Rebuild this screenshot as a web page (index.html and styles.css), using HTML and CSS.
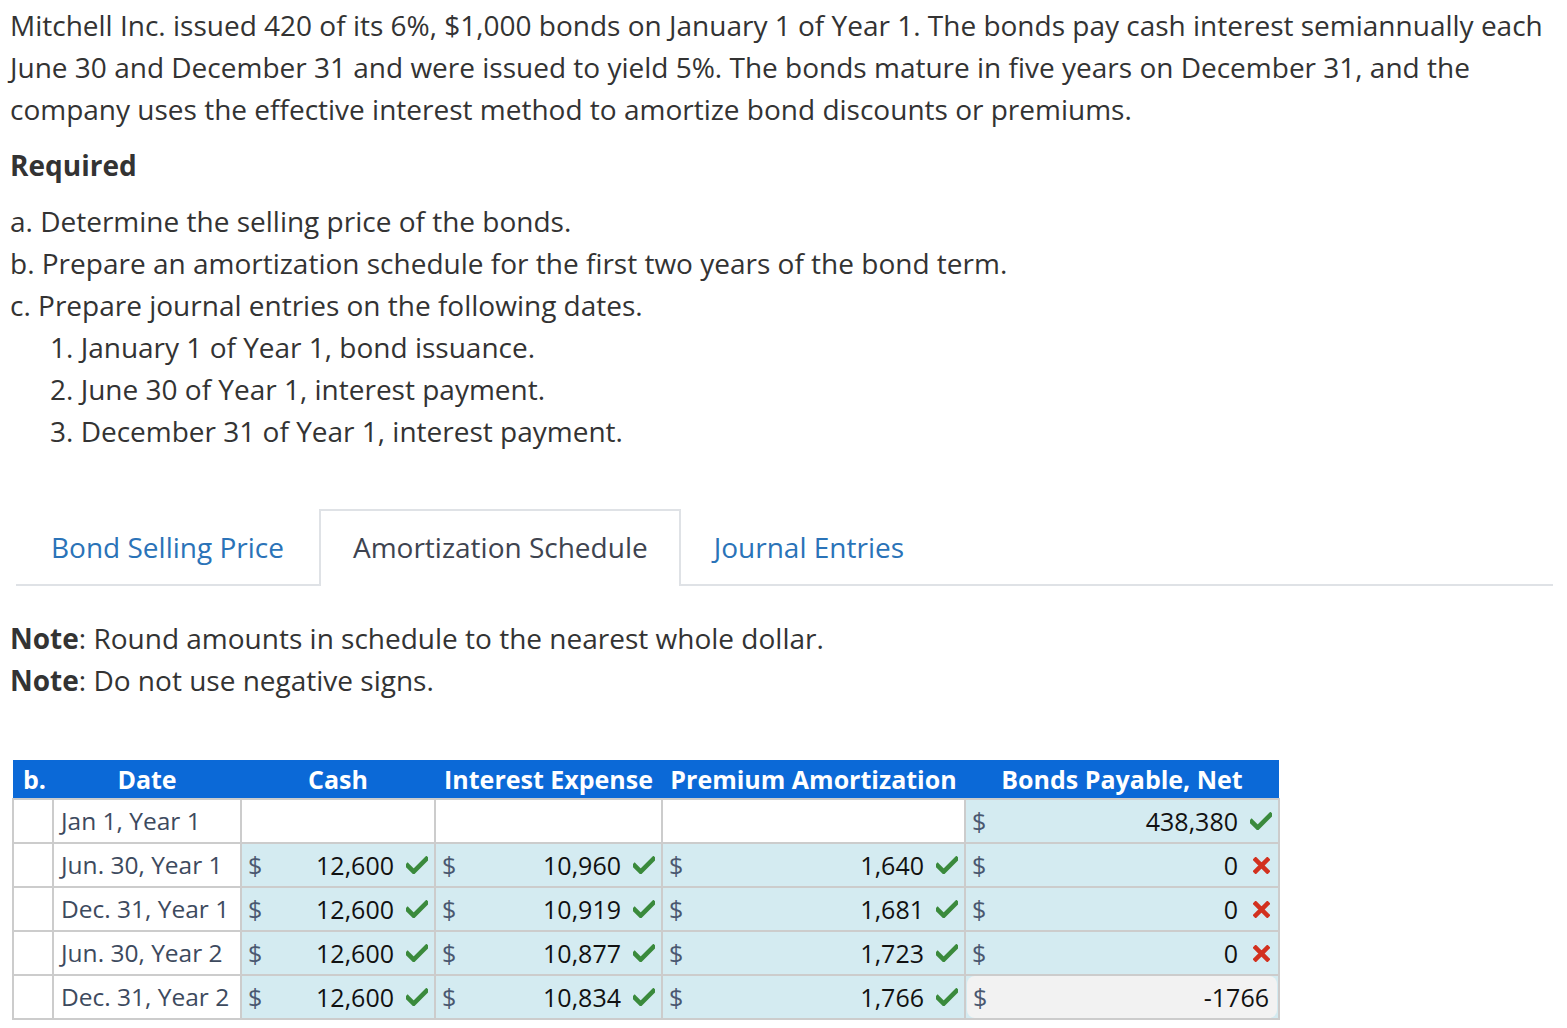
FILE: index.html
```html
<!DOCTYPE html>
<html>
<head>
<meta charset="utf-8">
<link rel="stylesheet" href="styles.css">
</head>
<body>
<div class="page">
  <p class="intro">Mitchell Inc. issued 420 of its 6%, $1,000 bonds on January 1 of Year 1. The bonds pay cash interest semiannually each June 30 and December 31 and were issued to yield 5%. The bonds mature in five years on December 31, and the company uses the effective interest method to amortize bond discounts or premiums.</p>
  <p class="required">Required</p>
  <div class="reqs">
    <div>a. Determine the selling price of the bonds.</div>
    <div>b. Prepare an amortization schedule for the first two years of the bond term.</div>
    <div>c. Prepare journal entries on the following dates.</div>
    <div class="sub">1. January 1 of Year 1, bond issuance.</div>
    <div class="sub">2. June 30 of Year 1, interest payment.</div>
    <div class="sub">3. December 31 of Year 1, interest payment.</div>
  </div>

  <div class="tabs">
    <div class="tab first">Bond Selling Price</div>
    <div class="tab active">Amortization Schedule</div>
    <div class="tab last">Journal Entries</div>
  </div>

  <div class="notes">
    <div><b>Note</b>: Round amounts in schedule to the nearest whole dollar.</div>
    <div><b>Note</b>: Do not use negative signs.</div>
  </div>

  <table class="sched">
    <colgroup>
      <col class="c0"><col class="c1"><col class="c2"><col class="c3"><col class="c4"><col class="c5">
    </colgroup>
    <thead>
      <tr>
        <th class="hb">b.</th>
        <th>Date</th>
        <th>Cash</th>
        <th>Interest Expense</th>
        <th>Premium Amortization</th>
        <th>Bonds Payable, Net</th>
      </tr>
    </thead>
    <tbody>
      <tr>
        <td></td>
        <td class="date">Jan 1, Year 1</td>
        <td class="empty"></td>
        <td class="empty"></td>
        <td class="empty"></td>
        <td class="amt"><div class="cell"><span class="dol">$</span><span class="num">438,380</span><span class="mark ok"><svg viewBox="0 0 20 16"><path d="M1.5 8.5 L7 14 L18.5 2.5" /></svg></span></div></td>
      </tr>
      <tr>
        <td></td>
        <td class="date">Jun. 30, Year 1</td>
        <td class="amt"><div class="cell"><span class="dol">$</span><span class="num">12,600</span><span class="mark ok"><svg viewBox="0 0 20 16"><path d="M1.5 8.5 L7 14 L18.5 2.5" /></svg></span></div></td>
        <td class="amt"><div class="cell"><span class="dol">$</span><span class="num">10,960</span><span class="mark ok"><svg viewBox="0 0 20 16"><path d="M1.5 8.5 L7 14 L18.5 2.5" /></svg></span></div></td>
        <td class="amt"><div class="cell"><span class="dol">$</span><span class="num">1,640</span><span class="mark ok"><svg viewBox="0 0 20 16"><path d="M1.5 8.5 L7 14 L18.5 2.5" /></svg></span></div></td>
        <td class="amt"><div class="cell"><span class="dol">$</span><span class="num">0</span><span class="mark bad"><svg viewBox="0 0 16 16"><path d="M2.5 2.5 L13.5 13.5 M13.5 2.5 L2.5 13.5" /></svg></span></div></td>
      </tr>
      <tr>
        <td></td>
        <td class="date">Dec. 31, Year 1</td>
        <td class="amt"><div class="cell"><span class="dol">$</span><span class="num">12,600</span><span class="mark ok"><svg viewBox="0 0 20 16"><path d="M1.5 8.5 L7 14 L18.5 2.5" /></svg></span></div></td>
        <td class="amt"><div class="cell"><span class="dol">$</span><span class="num">10,919</span><span class="mark ok"><svg viewBox="0 0 20 16"><path d="M1.5 8.5 L7 14 L18.5 2.5" /></svg></span></div></td>
        <td class="amt"><div class="cell"><span class="dol">$</span><span class="num">1,681</span><span class="mark ok"><svg viewBox="0 0 20 16"><path d="M1.5 8.5 L7 14 L18.5 2.5" /></svg></span></div></td>
        <td class="amt"><div class="cell"><span class="dol">$</span><span class="num">0</span><span class="mark bad"><svg viewBox="0 0 16 16"><path d="M2.5 2.5 L13.5 13.5 M13.5 2.5 L2.5 13.5" /></svg></span></div></td>
      </tr>
      <tr>
        <td></td>
        <td class="date">Jun. 30, Year 2</td>
        <td class="amt"><div class="cell"><span class="dol">$</span><span class="num">12,600</span><span class="mark ok"><svg viewBox="0 0 20 16"><path d="M1.5 8.5 L7 14 L18.5 2.5" /></svg></span></div></td>
        <td class="amt"><div class="cell"><span class="dol">$</span><span class="num">10,877</span><span class="mark ok"><svg viewBox="0 0 20 16"><path d="M1.5 8.5 L7 14 L18.5 2.5" /></svg></span></div></td>
        <td class="amt"><div class="cell"><span class="dol">$</span><span class="num">1,723</span><span class="mark ok"><svg viewBox="0 0 20 16"><path d="M1.5 8.5 L7 14 L18.5 2.5" /></svg></span></div></td>
        <td class="amt"><div class="cell"><span class="dol">$</span><span class="num">0</span><span class="mark bad"><svg viewBox="0 0 16 16"><path d="M2.5 2.5 L13.5 13.5 M13.5 2.5 L2.5 13.5" /></svg></span></div></td>
      </tr>
      <tr>
        <td></td>
        <td class="date">Dec. 31, Year 2</td>
        <td class="amt"><div class="cell"><span class="dol">$</span><span class="num">12,600</span><span class="mark ok"><svg viewBox="0 0 20 16"><path d="M1.5 8.5 L7 14 L18.5 2.5" /></svg></span></div></td>
        <td class="amt"><div class="cell"><span class="dol">$</span><span class="num">10,834</span><span class="mark ok"><svg viewBox="0 0 20 16"><path d="M1.5 8.5 L7 14 L18.5 2.5" /></svg></span></div></td>
        <td class="amt"><div class="cell"><span class="dol">$</span><span class="num">1,766</span><span class="mark ok"><svg viewBox="0 0 20 16"><path d="M1.5 8.5 L7 14 L18.5 2.5" /></svg></span></div></td>
        <td class="amt"><div class="cell input"><span class="dol">$</span><span class="num">-1766</span></div></td>
      </tr>
    </tbody>
  </table>
</div>
</body>
</html>
```

FILE: styles.css
```css
html, body {
  margin: 0;
  padding: 0;
  background: #fff;
}
body {
  font-family: "Open Sans", "Noto Sans", sans-serif;
  color: #333;
}
.page {
  padding: 4px 0 0 10px;
  font-size: 28px;
  line-height: 42px;
}
p { margin: 0; }
.intro { width: 1545px; }
.required {
  font-weight: 700;
  margin-top: 14px;
}
.reqs { margin-top: 14px; }
.sub { padding-left: 40px; }

.tabs {
  display: flex;
  margin: 57px 14px 0 6px;
  border-bottom: 2px solid #dfe2e6;
  height: 75px;
}
.tab {
  box-sizing: border-box;
  height: 75px;
  color: #2a73b8;
  line-height: 72px;
  border-top: 2px solid transparent;
}
.tab.first { padding: 0 35px; }
.tab.last { padding: 0 33px; }
.tab.active {
  color: #3e4450;
  background: #fff;
  padding: 0 31px 0 32px;
  height: 77px;
  margin-bottom: -2px;
  border: 2px solid #dfe2e6;
  border-bottom: none;
}

.notes { margin-top: 31px; }
.notes b { font-weight: 700; }

.sched {
  margin-top: 59px;
  margin-left: 2px;
  border-collapse: collapse;
  table-layout: fixed;
  width: 1266px;
  font-size: 25px;
  line-height: 30px;
}
.c0 { width: 40px; }
.c1 { width: 188px; }
.c2 { width: 194px; }
.c3 { width: 227px; }
.c4 { width: 303px; }
.c5 { width: 314px; }

.sched th {
  background: #0b69d7;
  color: #fff;
  font-weight: 700;
  height: 38px;
  padding: 0;
  text-align: center;
  white-space: nowrap;
}
.sched th.hb { text-align: left; padding-left: 10px; }
.sched td {
  border: 2px solid #cccccc;
  height: 42px;
  padding: 0;
  background: #fff;
}
.sched td.date {
  color: #3d4a5e;
  padding-left: 7px;
  white-space: nowrap;
  font-size: 24.5px;
}
.sched td.amt { background: #d4ebf1; }
.cell {
  display: flex;
  align-items: center;
  height: 42px;
  padding: 0 6px 0 6px;
}
.dol { color: #4a5870; }
.num {
  flex: 1;
  text-align: right;
  color: #111;
}
.mark {
  width: 22px;
  margin-left: 12px;
  display: flex;
  align-items: center;
}
.mark svg { display: block; }
.mark.ok svg { width: 22px; height: 18px; }
.mark.ok path { stroke: #3a8a3c; stroke-width: 4.2; fill: none; stroke-linecap: square; }
.mark.bad { justify-content: center; }
.mark.bad svg { width: 17px; height: 17px; }
.mark.bad path { stroke: #d2311f; stroke-width: 4.2; fill: none; stroke-linecap: square; }
.cell.input {
  background: #f2f2f2;
  border-radius: 8px;
  margin: 0 1px;
  padding-right: 8px;
}
```
